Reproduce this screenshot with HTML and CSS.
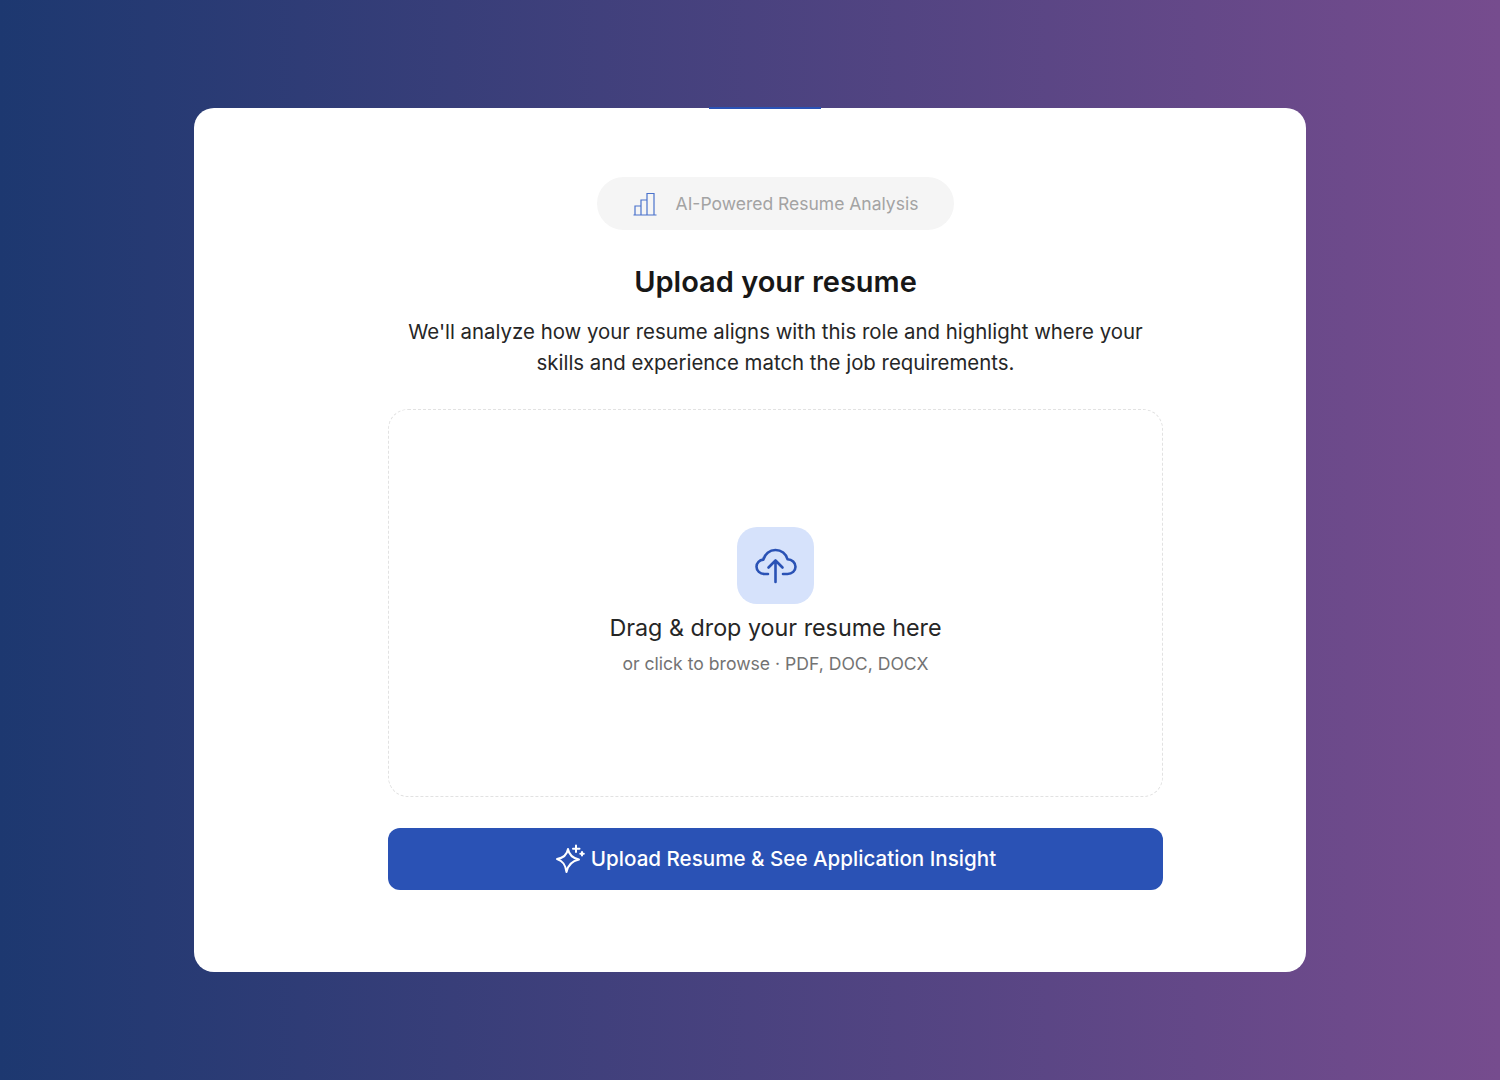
FILE: index.html
```html
<!DOCTYPE html>
<html lang="en">
<head>
    <meta charset="UTF-8">
    <meta name="viewport" content="width=device-width, initial-scale=1.0">
    <title>Upload your resume</title>
    <link rel="stylesheet" href="styles.css">
</head>
<body>
    <main class="card">
        <span class="card-accent"></span>
        <div class="badge">
            <svg class="badge-icon" viewBox="0 0 24 24" fill="none" stroke="currentColor" stroke-width="1.2">
                <path d="M0.500 23h23M2 23v-9h6v9M8 23V8h6v15M14 23V1.500h7V23"/>
            </svg>
            <span>AI-Powered Resume Analysis</span>
        </div>
        <h1>Upload your resume</h1>
        <p class="lead">We'll analyze how your resume aligns with this role and highlight where your skills and experience match the job requirements.</p>
        <div class="dropzone">
            <div class="drop-icon">
                <svg viewBox="0 0 42 36" fill="none" stroke="currentColor" stroke-width="2.600" stroke-linecap="round" stroke-linejoin="round">
                    <path d="M13 26H9.500C5 26 1.500 22.800 1.500 18.800c0-3.800 3-6.800 6.800-7.200C9.800 6 14.500 2 20.500 2c5.800 0 10.600 3.800 12 9.300 4.400.2 8 3.300 8 7.500 0 4-3.400 7.200-8 7.200H28"/>
                    <path d="M20.500 34V12.500M13.500 19.500l7-7 7 7"/>
                </svg>
            </div>
            <div class="drop-title">Drag &amp; drop your resume here</div>
            <div class="drop-hint">or click to browse · PDF, DOC, DOCX</div>
        </div>
        <button class="upload-btn" type="button">
            <svg class="spark" viewBox="0 0 30 30" fill="none" stroke="currentColor" stroke-width="2" stroke-linecap="round" stroke-linejoin="round">
                <path d="M13 5c1 6 4 9 11 10.500-7 1.500-11 5-12.500 12.500-1-7.500-3.500-11-9.500-13 6.500-1 10-4 11-10z"/>
                <path d="M21 1.500v6.500M18 4.800h6.500M27 8v3.500M25.300 9.800h3.500"/>
            </svg>
            Upload Resume &amp; See Application Insight
        </button>
    </main>
</body>
</html>
```

FILE: styles.css
```css
* {
    box-sizing: border-box;
}

body {
    margin: 0;
    height: 1080px;
    display: flex;
    align-items: center;
    justify-content: center;
    font-family: "Inter", "Noto Sans", sans-serif;
    background: linear-gradient(90deg, #1d3870, #764c8e);
}

.card {
    position: relative;
    width: 1112px;
    height: 864px;
    padding: 69px 143px 0 194px;
    background: white;
    border-radius: 20px;
    display: flex;
    flex-direction: column;
    align-items: center;
}

.card-accent {
    position: absolute;
    top: -1px;
    left: 515px;
    width: 112px;
    height: 2px;
    background: #2a52b5;
}

.badge {
    width: 357px;
    height: 53px;
    margin-bottom: 34px;
    display: flex;
    align-items: center;
    justify-content: center;
    gap: 19px;
    background: #f5f5f5;
    border-radius: 27px;
    font-size: 17.5px;
    color: #a3a3a3;
}

.badge-icon {
    width: 24px;
    height: 24px;
    color: #4a72cc;
}

h1 {
    margin: 0 0 16px;
    font-size: 29px;
    line-height: 36px;
    font-weight: 600;
    color: #171717;
}

.lead {
    margin: 0 0 31px;
    width: 760px;
    text-align: center;
    font-size: 20.4px;
    line-height: 31px;
    color: #262626;
}

.dropzone {
    width: 775px;
    height: 388px;
    margin-bottom: 31px;
    padding-top: 117px;
    display: flex;
    flex-direction: column;
    align-items: center;
    border: 1px dashed #e2e2e2;
    border-radius: 20px;
}

.drop-icon {
    width: 77px;
    height: 77px;
    margin-bottom: 9px;
    display: flex;
    align-items: center;
    justify-content: center;
    background: #d6e2fb;
    border-radius: 20px;
    color: #2a52b5;
}

.drop-icon svg {
    width: 42px;
    height: 36px;
}

.drop-title {
    font-size: 23.3px;
    line-height: 30px;
    color: #262626;
    margin-bottom: 9px;
}

.drop-hint {
    font-size: 17.6px;
    line-height: 24px;
    color: #737373;
}

.upload-btn {
    width: 775px;
    height: 62px;
    padding-bottom: 2px;
    display: flex;
    align-items: center;
    justify-content: center;
    gap: 6px;
    border: none;
    border-radius: 12px;
    background: #2a52b5;
    color: white;
    font-family: inherit;
    font-size: 20.6px;
    font-weight: 500;
}

.spark {
    width: 30px;
    height: 30px;
}
```
